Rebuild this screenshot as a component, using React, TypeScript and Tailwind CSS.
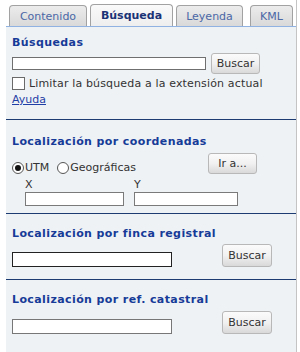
import React from "react";

function Btn({ label, className = "" }: { label: string; className?: string }) {
  return (
    <button
      className={
        "h-[21px] rounded-[3px] border border-[#b8b8b8] bg-gradient-to-b from-[#fbfbfb] via-[#f1f1f1] to-[#d9d9d9] text-[11px] leading-[13px] text-[#333] " +
        className
      }
    >
      {label}
    </button>
  );
}

function Radio({ checked }: { checked?: boolean }) {
  return (
    <span className="flex h-[12px] w-[12px] items-center justify-center rounded-full border border-[#555] bg-white">
      {checked && <span className="h-[6px] w-[6px] rounded-full bg-[#111]" />}
    </span>
  );
}

function Tab({ label, active, w }: { label: string; active?: boolean; w: string }) {
  return (
    <div
      className={
        "flex items-center justify-center rounded-t-[4px] border border-b-0 border-[#a2a2a2] text-[11px] leading-[13px] " +
        w +
        (active
          ? " h-[22px] bg-gradient-to-b from-[#fafafa] to-[#eeeeee] font-bold text-[#1b3376]"
          : " h-[21px] bg-gradient-to-b from-[#ececec] to-[#d9d9d9] text-[#4a67a6]")
      }
    >
      {label}
    </div>
  );
}

export default function App() {
  return (
    <div className="h-[352px] w-[300px] bg-white pl-[6px] font-['DejaVu_Sans',Verdana,sans-serif] text-[11px] leading-[13px] text-[#333]">
      <div className="flex h-full w-[291px] flex-col border-r border-[#c4c4c4]">
        <div className="flex h-[27px] shrink-0 items-end gap-[3px] border-b border-[#8fb2e2] pl-[3px]">
          <Tab label="Contenido" w="w-[78px]" />
          <Tab label="Búsqueda" w="w-[83px]" active />
          <Tab label="Leyenda" w="w-[67px]" />
          <div className="w-[1px]" />
          <Tab label="KML" w="w-[43px]" />
        </div>
        <div className="flex flex-1 flex-col bg-[#eff2f4]">
          {/* Búsquedas */}
          <div className="flex h-[93px] shrink-0 flex-col border-b border-[#1d3c72] pl-[6px] pt-[9px]">
            <div className="font-bold tracking-[0.4px] text-[#163b98]">Búsquedas</div>
            <div className="mt-[4px] flex items-center gap-[5px]">
              <input className="h-[13px] w-[194px] border border-[#6f6f6f] bg-white" />
              <Btn label="Buscar" className="w-[49px]" />
            </div>
            <div className="mt-[3px] flex items-center gap-[4px]">
              <span className="h-[13px] w-[13px] border border-[#6a6a6a] bg-white" />
              <span className="tracking-[0.15px]">Limitar la búsqueda a la extensión actual</span>
            </div>
            <a className="mt-[3px] w-fit text-[#1f3ea6] underline">Ayuda</a>
          </div>
          {/* Coordenadas */}
          <div className="flex h-[94px] shrink-0 flex-col border-b border-[#1d3c72] pl-[6px] pt-[15px]">
            <div className="font-bold tracking-[0.4px] text-[#163b98]">Localización por coordenadas</div>
            <div className="mt-[5px] flex items-start">
              <div className="mt-[8px] flex items-center">
                <Radio checked />
                <span className="ml-[1px]">UTM</span>
                <span className="ml-[8px]" />
                <Radio />
                <span className="ml-[1px]">Geográficas</span>
              </div>
              <Btn label="Ir a..." className="ml-[72px] w-[49px]" />
            </div>
            <div className="mt-[3px] flex gap-[10px] pl-[13px]">
              <div className="flex flex-col">
                <span className="leading-[15px]">X</span>
                <input className="h-[14px] w-[99px] border border-[#7a7a7a] bg-white" />
              </div>
              <div className="flex flex-col">
                <span className="leading-[15px]">Y</span>
                <input className="h-[14px] w-[104px] border border-[#7a7a7a] bg-white" />
              </div>
            </div>
          </div>
          {/* Finca registral */}
          <div className="flex h-[66px] shrink-0 flex-col border-b border-[#1d3c72] pl-[6px] pt-[13px]">
            <div className="font-bold tracking-[0.4px] text-[#163b98]">Localización por finca registral</div>
            <div className="mt-[4px] flex items-end">
              <input className="h-[15px] w-[160px] border border-[#222] bg-white" />
              <Btn label="Buscar" className="ml-[50px] h-[23px] w-[50px]" />
            </div>
          </div>
          {/* Ref catastral */}
          <div className="flex flex-1 flex-col pl-[6px] pt-[13px]">
            <div className="font-bold tracking-[0.4px] text-[#163b98]">Localización por ref. catastral</div>
            <div className="mt-[5px] flex items-end">
              <input className="h-[15px] w-[160px] border border-[#777] bg-white" />
              <Btn label="Buscar" className="ml-[50px] h-[23px] w-[50px]" />
            </div>
          </div>
        </div>
      </div>
    </div>
  );
}
